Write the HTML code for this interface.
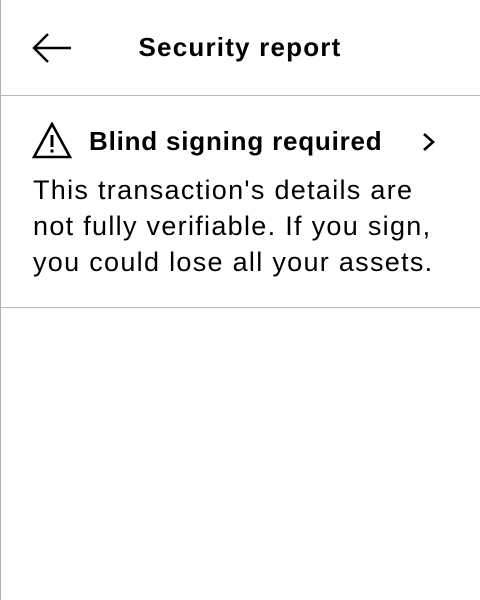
<!DOCTYPE html>
<html><head><meta charset="utf-8"><style>
html,body{margin:0;padding:0;background:#fff;}
body{width:480px;height:600px;position:relative;overflow:hidden;font-family:"Liberation Sans",sans-serif;color:#000;}
.lb{position:absolute;left:0;top:0;width:1px;height:600px;background:#b0b0b0;}
.hr{position:absolute;left:0;width:480px;height:1px;background:#b8b8b8;}
.title{position:absolute;left:0;width:480px;top:30px;text-align:center;font-weight:bold;font-size:26px;line-height:34px;letter-spacing:1.2px;}
.h2{position:absolute;left:89px;top:124px;font-weight:bold;font-size:26px;line-height:34px;letter-spacing:0.8px;}
.body{position:absolute;left:33px;top:172px;font-size:27px;line-height:36px;width:460px;letter-spacing:1.3px;white-space:nowrap;}
svg{position:absolute;}
</style></head><body>
<div class="lb"></div>
<svg style="left:32px;top:30px" width="42" height="36" viewBox="0 0 42 36"><path d="M39 18H2M16 4L2 18L16 32" fill="none" stroke="#000" stroke-width="2.4"/></svg>
<div class="title">Security report</div>
<div class="hr" style="top:95px"></div>
<svg style="left:32px;top:122px" width="40" height="37" viewBox="0 0 40 37"><path d="M20 2L2 35H38Z" fill="none" stroke="#000" stroke-width="2.6" stroke-linejoin="miter"/><rect x="18.5" y="13" width="3" height="12" fill="#000"/><rect x="18.5" y="27.5" width="3" height="3" fill="#000"/></svg>
<div class="h2">Blind signing required</div>
<svg style="left:420px;top:132px" width="18" height="20" viewBox="0 0 18 20"><path d="M4 2L13 10L4 18" fill="none" stroke="#000" stroke-width="2.6"/></svg>
<div class="body">This transaction's details are<br>not fully verifiable. If you sign,<br>you could lose all your assets.</div>
<div class="hr" style="top:307px"></div>
</body></html>
